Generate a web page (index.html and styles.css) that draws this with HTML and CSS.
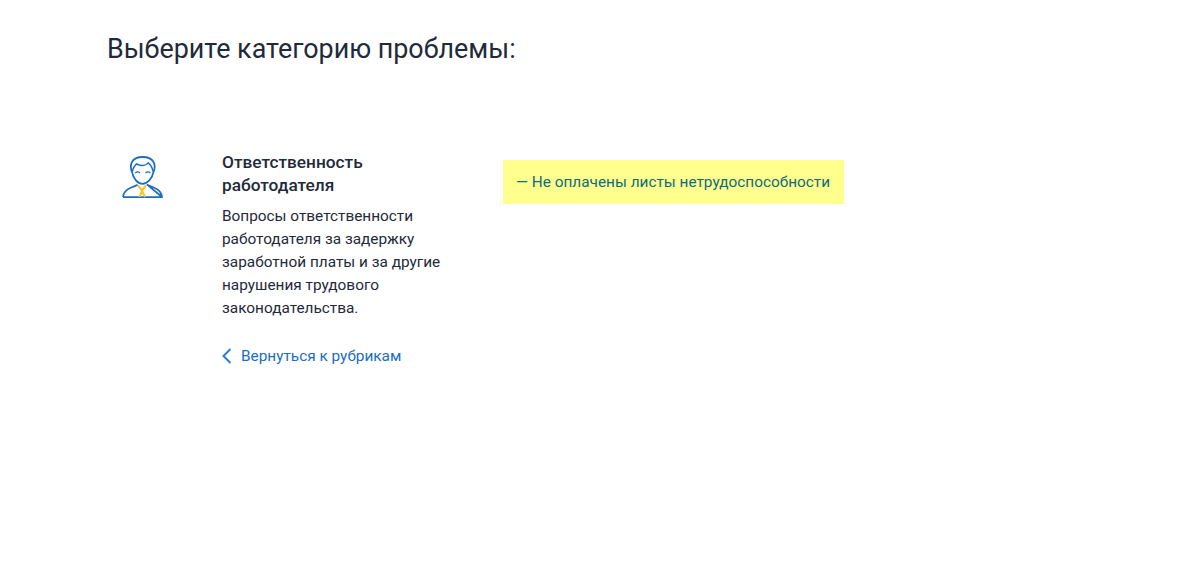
FILE: index.html
```html
<!DOCTYPE html>
<html lang="ru">
<head>
<meta charset="utf-8">
<title>Выберите категорию проблемы</title>
<link rel="stylesheet" href="styles.css">
</head>
<body>
<main class="page">
  <h1 class="title">Выберите категорию проблемы:</h1>
  <div class="layout">
    <div class="icon-col">
      <svg class="person" width="41" height="43" viewBox="0 0 42 44" fill="none">
        <path d="M1 42 C1.500 37 4 34.500 9 32.500 L16 29.500 M26 29.500 L33 32.500 C38 34.500 40.500 37 41 42 Z M1 42 L41 42" stroke="#1b6ec2" stroke-width="1.800" stroke-linejoin="round"/>
        <path d="M16.500 30 L20.500 35.500 L24.500 30 M20.500 35.500 L18 42 M20.500 35.500 L23.500 42" stroke="#f5c21b" stroke-width="2"/>
        <path d="M10.500 17 C9 14 8.500 10 10 6.500 C12 2.500 16 1 21 1 C26 1 30.500 2.500 32.500 6.500 C34 10 33.500 14 32 17 C31 23 26 28.500 21 28.500 C16 28.500 11.500 23 10.500 17 Z" stroke="#1b6ec2" stroke-width="1.800"/>
        <path d="M10.500 16 C11.500 12 13 9.500 15 8 C19 10.500 24 10.500 27 7 C29.500 9 31 12 32 16" stroke="#1b6ec2" stroke-width="1.500"/>
        <path d="M13.500 17.500 C15 16 17 16 18.500 17.500 M24 17.500 C25.500 16 27.500 16 29 17.500" stroke="#1b6ec2" stroke-width="1.300"/>
      </svg>
    </div>
    <section class="info">
      <h2 class="info-title">Ответственность работодателя</h2>
      <p class="info-text">Вопросы ответственности работодателя за задержку заработной платы и за другие нарушения трудового законодательства.</p>
      <a class="back" href="#">
        <svg class="chevron" width="10" height="16" viewBox="0 0 10 16" fill="none"><path d="M8.500 1 L1.500 8 L8.500 15" stroke="#2b7bd0" stroke-width="2"/></svg>
        Вернуться к рубрикам
      </a>
    </section>
    <div class="topics">
      <a class="topic" href="#">— Не оплачены листы нетрудоспособности</a>
    </div>
  </div>
</main>
</body>
</html>
```
FILE: styles.css
```css
* { box-sizing: border-box; }
html, body { margin: 0; background: #fff; }
body { font-family: Roboto, "Noto Sans", sans-serif; color: #1f2a3a; }
.page { padding: 31px 0 0 107px; height: 576px; overflow: hidden; }
.title { margin: 0 0 84px; font-size: 26.88px; line-height: 36px; font-weight: 400; }
.layout { display: flex; align-items: flex-start; }
.icon-col { width: 115px; padding: 5px 0 0 15px; flex: none; }
.person { display: block; }
.info { width: 281px; flex: none; }
.info-title { margin: 0 0 8px; width: 200px; font-size: 17.28px; line-height: 23px; font-weight: 500; }
.info-text { margin: 0 0 24px; width: 225px; font-size: 15.36px; line-height: 23px; }
.back { display: flex; align-items: center; gap: 9px; font-size: 15.36px; line-height: 24px; color: #1b6ec2; text-decoration: none; }
.topics { padding-top: 9px; margin-left: -0.5px; }
.topic { display: block; background: #ffff8d; color: #0f6b80; padding: 10px 13.500px; font-size: 15.36px; line-height: 24px; text-decoration: none; white-space: nowrap; }
```
